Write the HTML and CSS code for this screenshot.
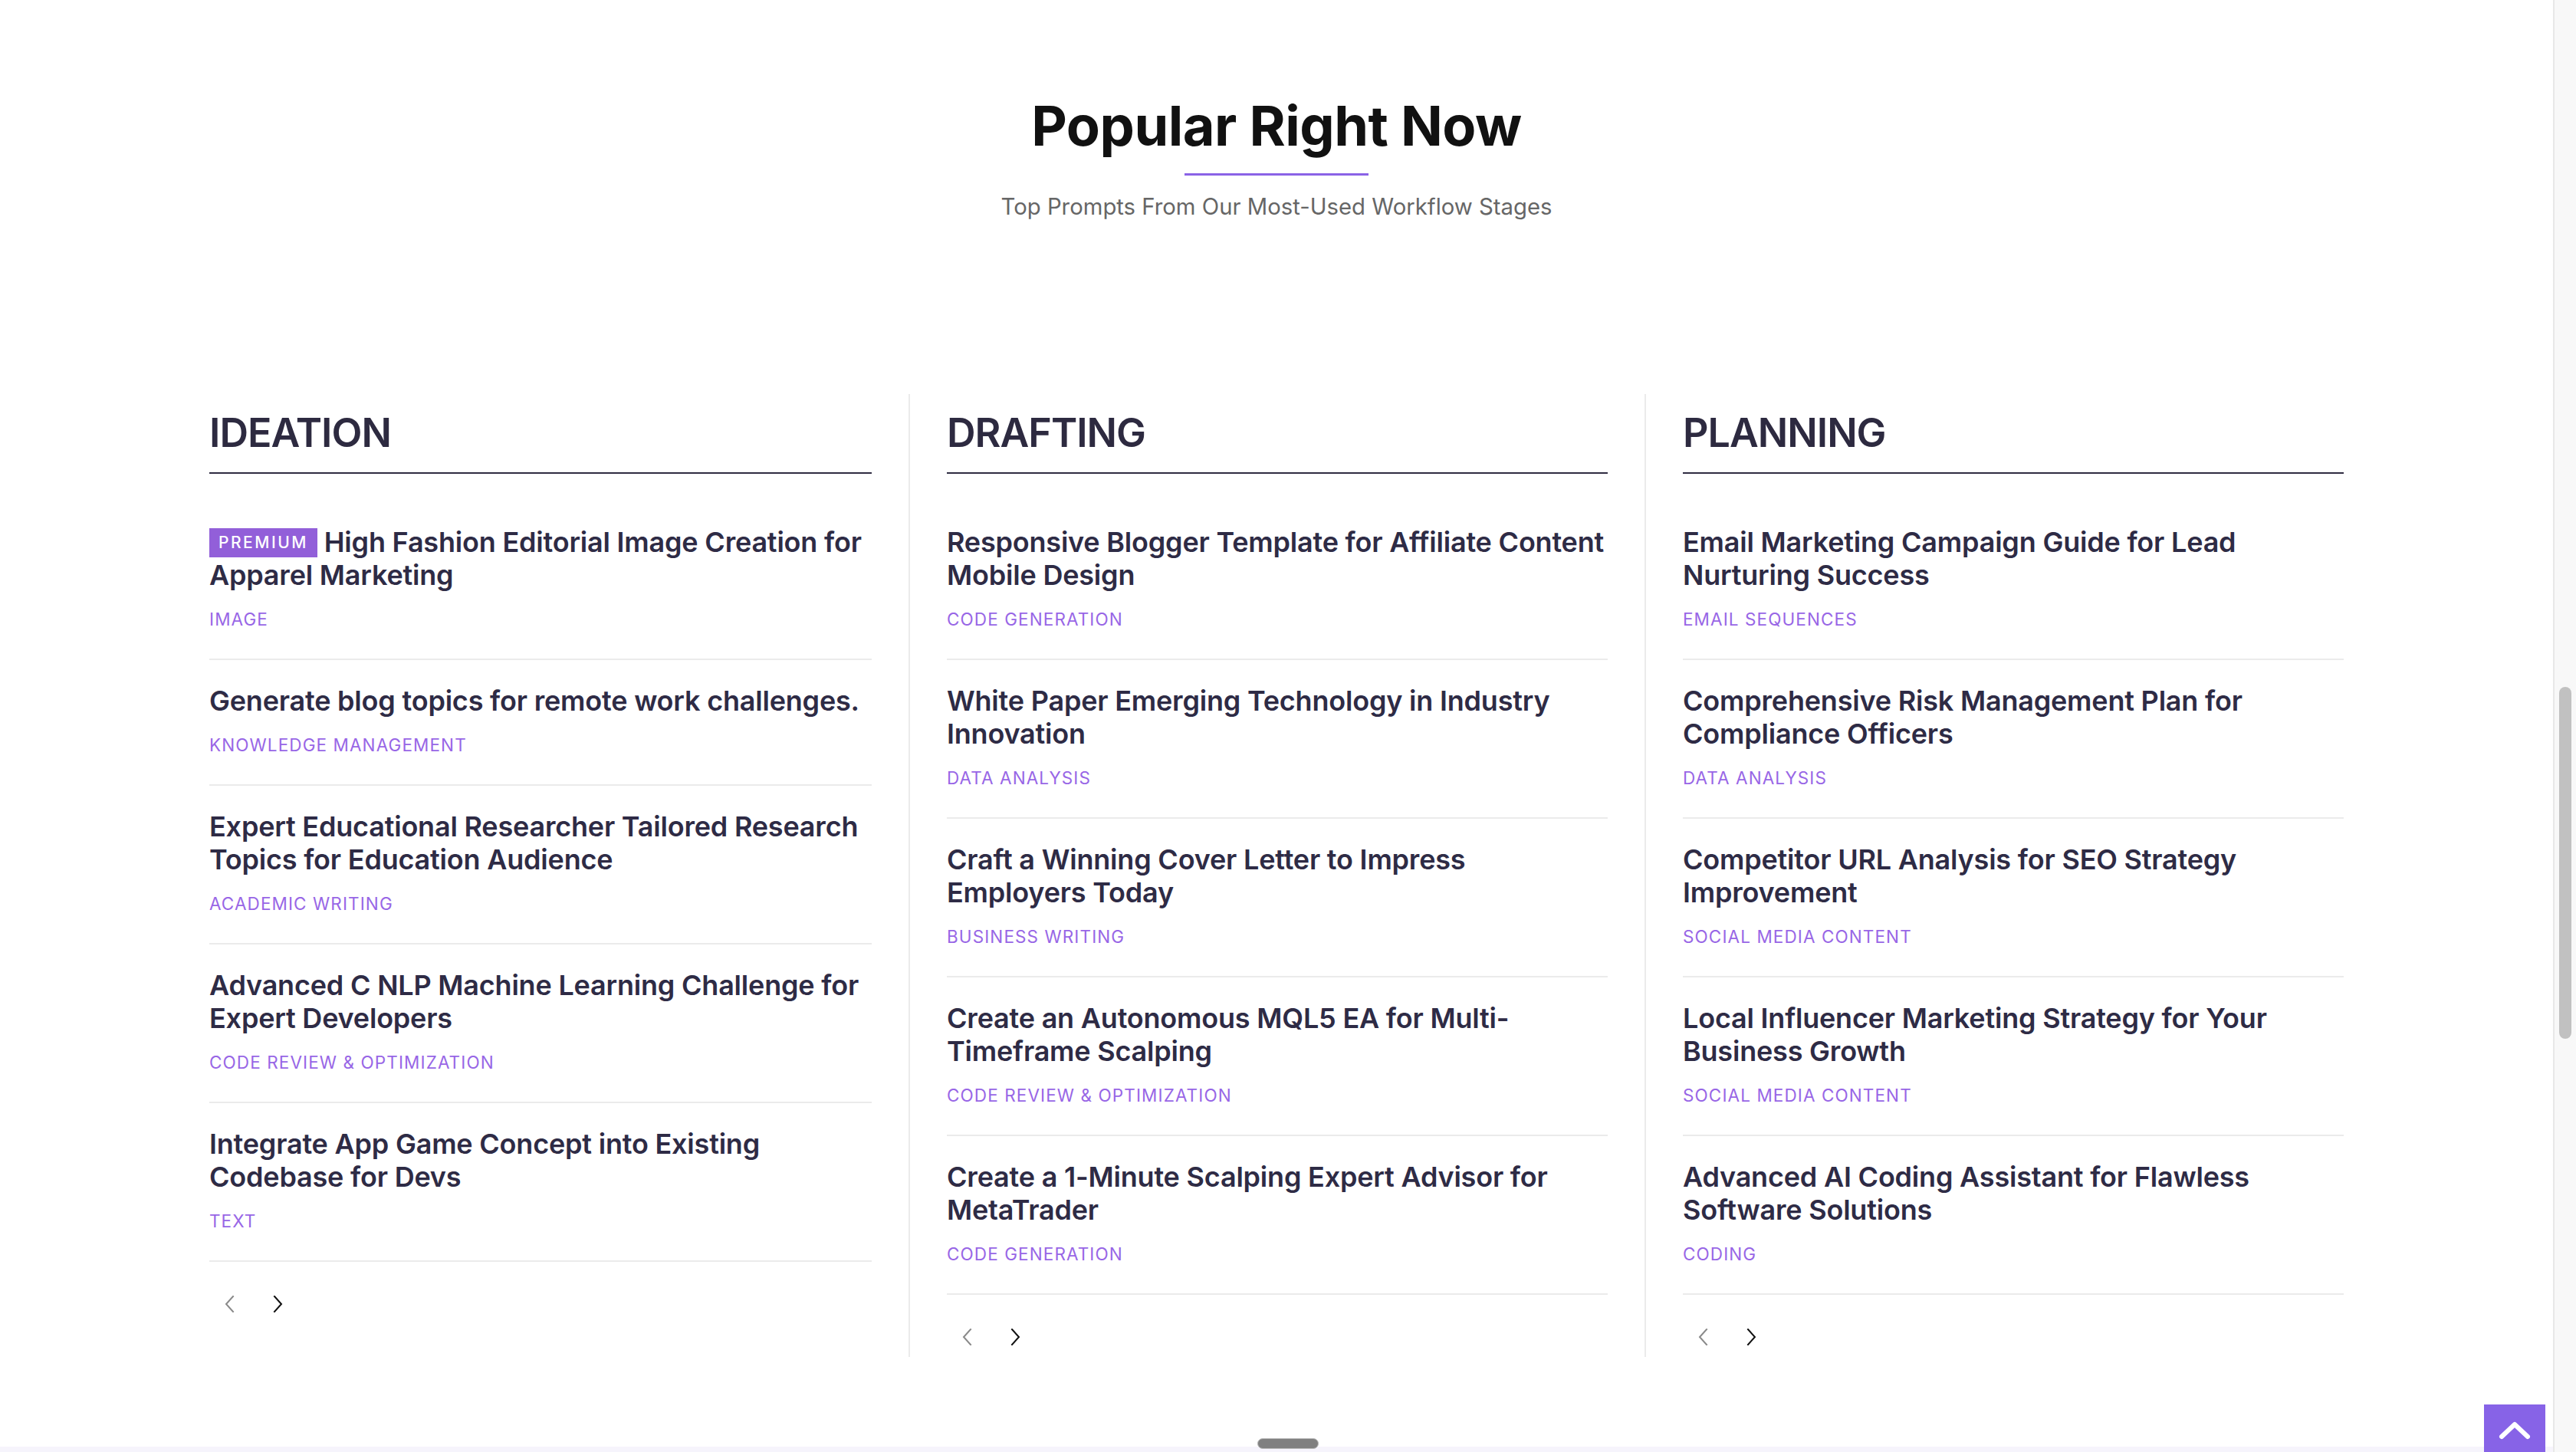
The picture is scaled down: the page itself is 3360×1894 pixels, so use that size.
FILE: index.html
```html
<!DOCTYPE html>
<html lang="en">
<head>
<meta charset="utf-8">
<title>Popular Right Now</title>
<link rel="stylesheet" href="styles.css">
</head>
<body>
<div class="page">
  <section class="popular">
    <header class="popular-head">
      <h1 class="popular-title">Popular Right Now</h1>
      <div class="popular-rule"></div>
      <p class="popular-sub">Top Prompts From Our Most-Used Workflow Stages</p>
    </header>

    <div class="stages">
      <div class="stage">
        <h2 class="stage-title">IDEATION</h2>
        <ul class="prompt-list">
          <li class="prompt">
            <a class="prompt-name"><span class="badge">PREMIUM</span> High Fashion Editorial Image Creation for Apparel Marketing</a>
            <span class="prompt-tag">IMAGE</span>
          </li>
          <li class="prompt">
            <a class="prompt-name">Generate blog topics for remote work challenges.</a>
            <span class="prompt-tag">KNOWLEDGE MANAGEMENT</span>
          </li>
          <li class="prompt">
            <a class="prompt-name">Expert Educational Researcher Tailored Research Topics for Education Audience</a>
            <span class="prompt-tag">ACADEMIC WRITING</span>
          </li>
          <li class="prompt">
            <a class="prompt-name">Advanced C NLP Machine Learning Challenge for Expert Developers</a>
            <span class="prompt-tag">CODE REVIEW &amp; OPTIMIZATION</span>
          </li>
          <li class="prompt">
            <a class="prompt-name">Integrate App Game Concept into Existing Codebase for Devs</a>
            <span class="prompt-tag">TEXT</span>
          </li>
        </ul>
        <div class="pager">
          <button class="pager-btn pager-prev" aria-label="Previous"><svg viewBox="0 0 14 22" width="14" height="22"><polyline points="12,1 3,11 12,21"/></svg></button>
          <button class="pager-btn pager-next" aria-label="Next"><svg viewBox="0 0 14 22" width="14" height="22"><polyline points="2,1 11,11 2,21"/></svg></button>
        </div>
      </div>

      <div class="stage">
        <h2 class="stage-title">DRAFTING</h2>
        <ul class="prompt-list">
          <li class="prompt">
            <a class="prompt-name">Responsive Blogger Template for Affiliate Content Mobile Design</a>
            <span class="prompt-tag">CODE GENERATION</span>
          </li>
          <li class="prompt">
            <a class="prompt-name">White Paper Emerging Technology in Industry Innovation</a>
            <span class="prompt-tag">DATA ANALYSIS</span>
          </li>
          <li class="prompt">
            <a class="prompt-name">Craft a Winning Cover Letter to Impress Employers Today</a>
            <span class="prompt-tag">BUSINESS WRITING</span>
          </li>
          <li class="prompt">
            <a class="prompt-name">Create an Autonomous MQL5 EA for Multi-Timeframe Scalping</a>
            <span class="prompt-tag">CODE REVIEW &amp; OPTIMIZATION</span>
          </li>
          <li class="prompt">
            <a class="prompt-name">Create a 1-Minute Scalping Expert Advisor for MetaTrader</a>
            <span class="prompt-tag">CODE GENERATION</span>
          </li>
        </ul>
        <div class="pager">
          <button class="pager-btn pager-prev" aria-label="Previous"><svg viewBox="0 0 14 22" width="14" height="22"><polyline points="12,1 3,11 12,21"/></svg></button>
          <button class="pager-btn pager-next" aria-label="Next"><svg viewBox="0 0 14 22" width="14" height="22"><polyline points="2,1 11,11 2,21"/></svg></button>
        </div>
      </div>

      <div class="stage">
        <h2 class="stage-title">PLANNING</h2>
        <ul class="prompt-list">
          <li class="prompt">
            <a class="prompt-name">Email Marketing Campaign Guide for Lead Nurturing Success</a>
            <span class="prompt-tag">EMAIL SEQUENCES</span>
          </li>
          <li class="prompt">
            <a class="prompt-name">Comprehensive Risk Management Plan for Compliance Officers</a>
            <span class="prompt-tag">DATA ANALYSIS</span>
          </li>
          <li class="prompt">
            <a class="prompt-name">Competitor URL Analysis for SEO Strategy Improvement</a>
            <span class="prompt-tag">SOCIAL MEDIA CONTENT</span>
          </li>
          <li class="prompt">
            <a class="prompt-name">Local Influencer Marketing Strategy for Your Business Growth</a>
            <span class="prompt-tag">SOCIAL MEDIA CONTENT</span>
          </li>
          <li class="prompt">
            <a class="prompt-name">Advanced AI Coding Assistant for Flawless Software Solutions</a>
            <span class="prompt-tag">CODING</span>
          </li>
        </ul>
        <div class="pager">
          <button class="pager-btn pager-prev" aria-label="Previous"><svg viewBox="0 0 14 22" width="14" height="22"><polyline points="12,1 3,11 12,21"/></svg></button>
          <button class="pager-btn pager-next" aria-label="Next"><svg viewBox="0 0 14 22" width="14" height="22"><polyline points="2,1 11,11 2,21"/></svg></button>
        </div>
      </div>
    </div>
  </section>
  <section class="next-section"></section>
</div>

<div class="drag-handle"></div>
<button class="to-top" aria-label="Back to top"><svg viewBox="0 0 44 28" width="44" height="28"><polyline points="5,23 22,7 39,23"/></svg></button>
<div class="scrollbar"><div class="scrollbar-thumb"></div></div>
</body>
</html>
```
FILE: styles.css
```css
* { box-sizing: border-box; }

html, body {
  margin: 0;
  padding: 0;
  background: #ffffff;
  overflow: hidden;
}

body {
  font-family: Inter, "Noto Sans", "Liberation Sans", sans-serif;
  color: #2e2b45;
}

.page {
  margin-right: 30px;
}

.popular {
  padding-top: 121px;
}

.popular-head {
  text-align: center;
}

.popular-title {
  margin: 0;
  font-size: 72px;
  line-height: 86px;
  font-weight: 700;
  color: #111111;
  letter-spacing: -0.5px;
}

.popular-rule {
  width: 240px;
  height: 3px;
  margin: 19px auto 0;
  background: #8a63e6;
}

.popular-sub {
  margin: 21px 0 0;
  font-size: 29.3px;
  line-height: 40px;
  color: #666666;
  font-weight: 400;
}

.stages {
  width: 2880px;
  margin: 224px auto 0;
  display: grid;
  grid-template-columns: repeat(3, 1fr);
}

.stage {
  padding: 20px 48px 6px;
}

.stage + .stage {
  border-left: 2px solid #ebebeb;
}

.stage-title {
  margin: 0;
  padding-bottom: 20px;
  border-bottom: 2px solid #2f2c42;
  font-size: 52px;
  line-height: 62px;
  font-weight: 600;
  color: #2d2a40;
  letter-spacing: -1px;
}

.prompt-list {
  list-style: none;
  margin: 36px 0 0;
  padding: 0;
}

.prompt {
  padding: 32px 0 35px;
  border-bottom: 2px solid #ebebeb;
}

.prompt-name {
  display: block;
  font-size: 36px;
  line-height: 43px;
  font-weight: 600;
  color: #2e2b45;
  letter-spacing: -0.2px;
}

.badge {
  display: inline-block;
  height: 38px;
  line-height: 38px;
  padding: 0 12px;
  background: #925fd9;
  color: #ffffff;
  font-size: 21px;
  font-weight: 500;
  letter-spacing: 2.5px;
  vertical-align: 5px;
}

.prompt-tag {
  display: block;
  margin-top: 20px;
  font-size: 22.5px;
  line-height: 32px;
  letter-spacing: 1.1px;
  color: #9866e6;
  font-weight: 400;
}

.pager {
  display: flex;
  gap: 12px;
  margin-top: 35px;
}

.pager-btn {
  width: 52px;
  height: 40px;
  padding: 0;
  border: 0;
  background: transparent;
  display: flex;
  align-items: center;
  justify-content: center;
}

.pager-btn svg {
  fill: none;
  stroke-width: 2;
  stroke-linecap: square;
}

.pager-prev svg { stroke: #8a8a8a; }
.pager-next svg { stroke: #111111; }

.next-section {
  margin-top: 117px;
  height: 200px;
  background: #f6f4fc;
}

.drag-handle {
  position: fixed;
  left: 1640px;
  top: 1876px;
  width: 80px;
  height: 14px;
  border-radius: 7px;
  background: #808080;
  border: 1px solid #b8b8b8;
}

.to-top {
  position: fixed;
  left: 3240px;
  top: 1832px;
  width: 80px;
  height: 80px;
  padding: 0;
  border: 0;
  background: #8763e7;
  display: flex;
  justify-content: center;
  align-items: flex-start;
  padding-top: 19px;
}

.to-top svg {
  fill: none;
  stroke: #ffffff;
  stroke-width: 6;
  stroke-linecap: round;
  stroke-linejoin: round;
}

.scrollbar {
  position: fixed;
  top: 0;
  right: 0;
  width: 30px;
  height: 100%;
  background: #f8f8f8;
  border-left: 2px solid #e8e8e8;
}

.scrollbar-thumb {
  position: absolute;
  left: 6px;
  top: 896px;
  width: 16px;
  height: 459px;
  border-radius: 8px;
  background: #c1c1c1;
}
```
